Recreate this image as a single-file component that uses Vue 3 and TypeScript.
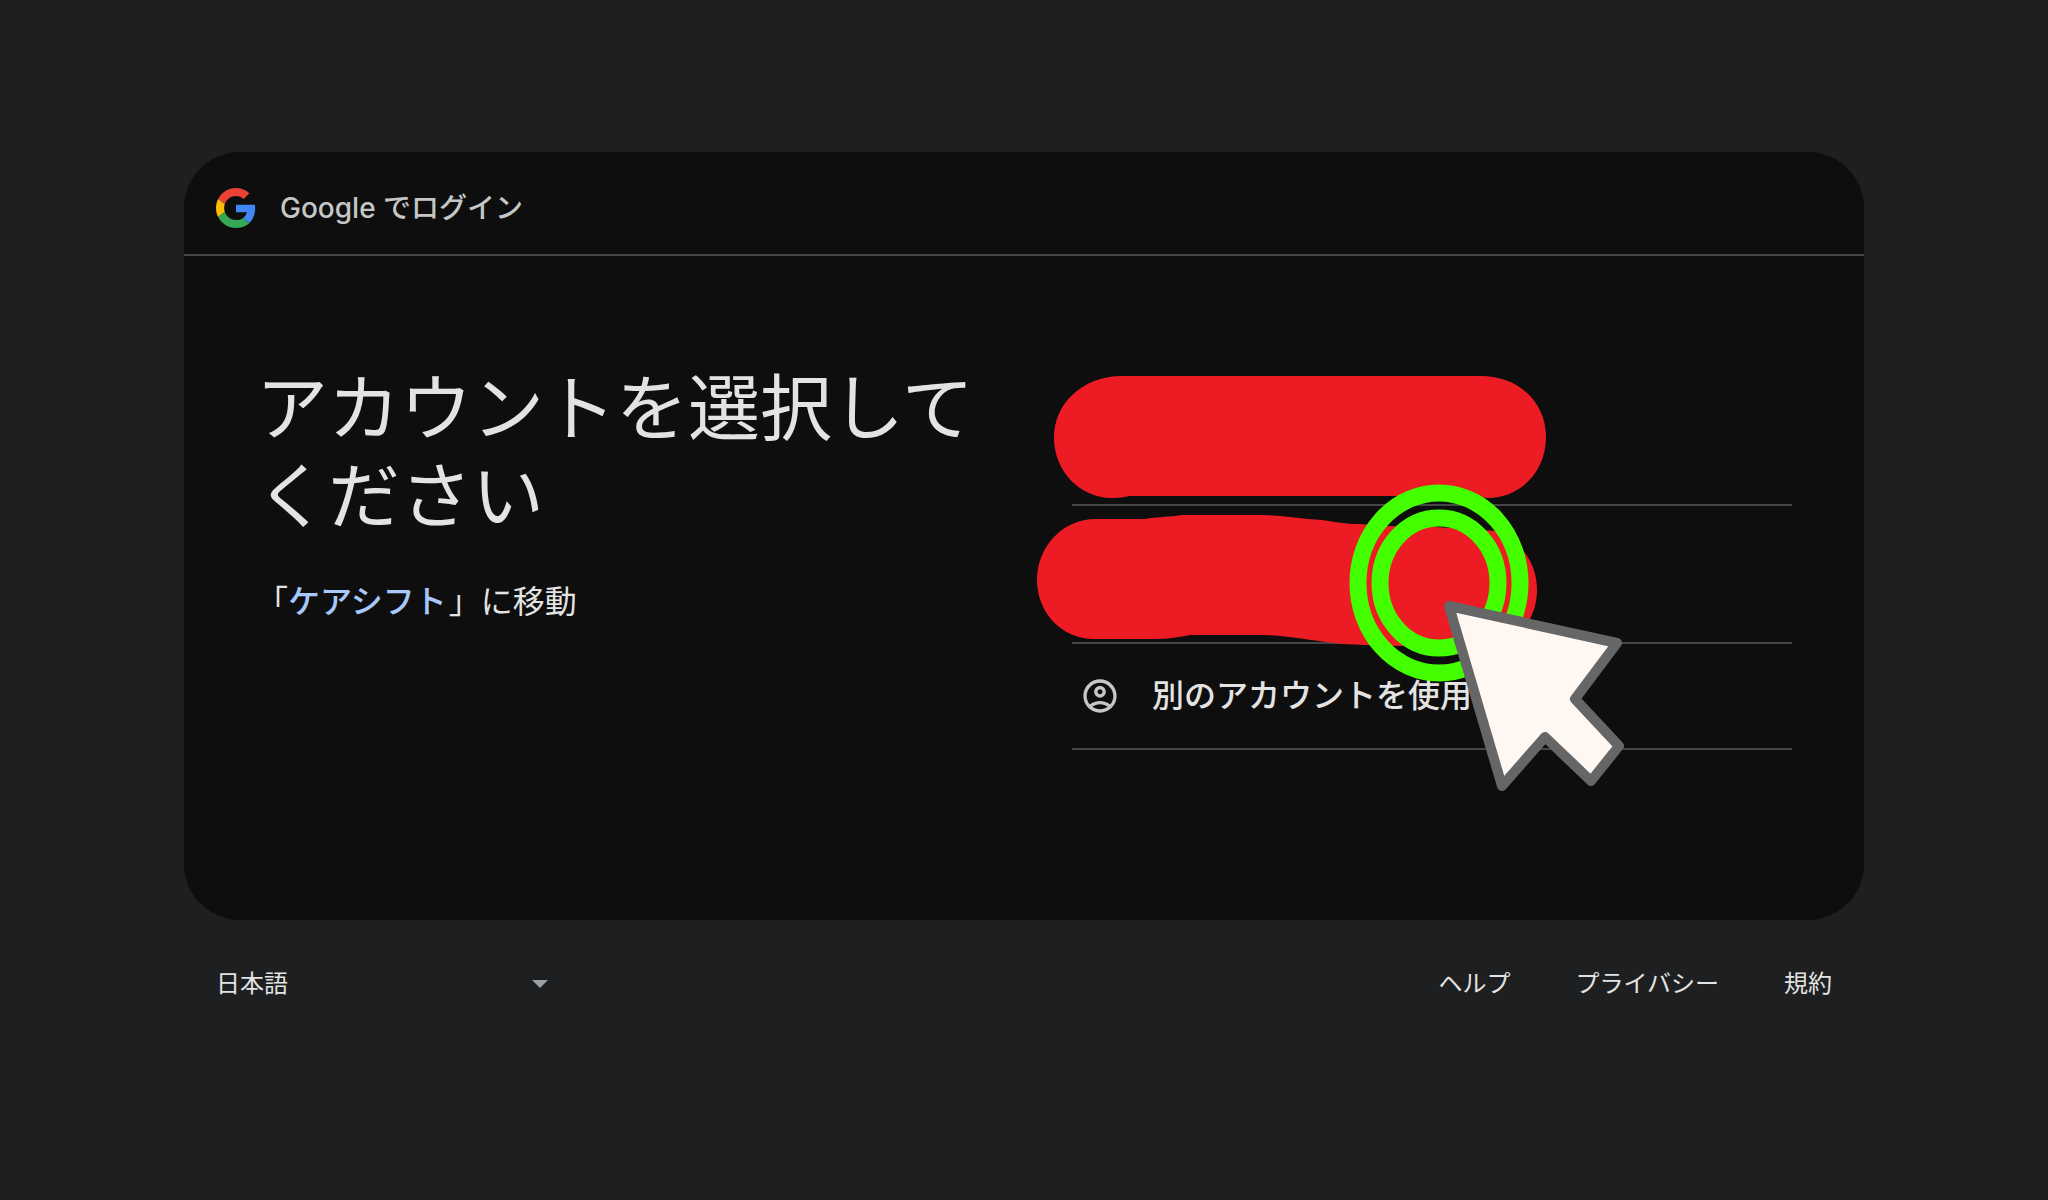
<script setup lang="ts">
import { ref } from 'vue'

interface FooterLink {
  label: string
  href: string
}

const language = ref('ja')
const links: FooterLink[] = [
  { label: 'ヘルプ', href: '#help' },
  { label: 'プライバシー', href: '#privacy' },
  { label: '規約', href: '#terms' },
]
</script>

<template>
  <div class="page">
    <main class="card">
      <header class="brand">
        <svg class="logo" viewBox="0 0 48 48" aria-hidden="true">
          <path fill="#ea4335" d="M24 9.5c3.54 0 6.71 1.22 9.21 3.6l6.85-6.85C35.9 2.38 30.47 0 24 0 14.62 0 6.51 5.38 2.56 13.22l7.98 6.19C12.43 13.72 17.74 9.5 24 9.5z" />
          <path fill="#4285f4" d="M46.98 24.55c0-1.57-.15-3.09-.38-4.55H24v9.02h12.94c-.58 2.96-2.26 5.48-4.78 7.18l7.73 6c4.51-4.18 7.09-10.36 7.09-17.65z" />
          <path fill="#fbbc05" d="M10.53 28.59c-.48-1.45-.76-2.99-.76-4.59s.27-3.14.76-4.59l-7.98-6.19C.92 16.46 0 20.12 0 24c0 3.88.92 7.54 2.56 10.78l7.97-6.19z" />
          <path fill="#34a853" d="M24 48c6.48 0 11.93-2.13 15.89-5.81l-7.73-6c-2.15 1.45-4.92 2.3-8.16 2.3-6.26 0-11.57-4.22-13.47-9.91l-7.98 6.19C6.51 42.62 14.62 48 24 48z" />
        </svg>
        <span>Google でログイン</span>
      </header>

      <div class="content">
        <section class="intro">
          <h1>アカウントを選択してください</h1>
          <p>「<a href="#app">ケアシフト</a>」に移動</p>
        </section>

        <section class="accounts">
          <ul>
            <li><button class="account" type="button" aria-label="アカウント 1"></button></li>
            <li><button class="account" type="button" aria-label="アカウント 2"></button></li>
            <li>
              <button class="other" type="button">
                <svg class="person" viewBox="0 0 24 24" aria-hidden="true">
                  <path d="M12 2C6.48 2 2 6.48 2 12s4.48 10 10 10 10-4.48 10-10S17.52 2 12 2zM7.35 18.5C8.66 17.56 10.26 17 12 17s3.34.56 4.65 1.5C15.34 19.44 13.74 20 12 20s-3.34-.56-4.65-1.5zm10.79-1.38C16.45 15.8 14.32 15 12 15s-4.45.8-6.14 2.12C4.7 15.73 4 13.95 4 12c0-4.42 3.58-8 8-8s8 3.58 8 8c0 1.95-.7 3.73-1.86 5.12z" />
                  <path d="M12 6c-1.93 0-3.5 1.57-3.5 3.5S10.07 13 12 13s3.5-1.57 3.5-3.5S13.93 6 12 6zm0 5c-.83 0-1.5-.67-1.5-1.5S11.17 8 12 8s1.5.67 1.5 1.5S12.83 11 12 11z" />
                </svg>
                <span>別のアカウントを使用</span>
              </button>
            </li>
          </ul>
          <svg class="marks" viewBox="1020 360 640 440" aria-hidden="true">
            <g fill="#ed1c24">
              <path d="M1122 376H1480C1521 376 1546 404 1546 437C1546 472 1520 498 1488 498C1483 498 1480 497 1476 496H1130C1124 497 1119 498 1112 498C1080 498 1054 471 1054 438C1054 403 1083 376 1122 376Z" />
              <path d="M1096 519H1145C1155 517 1170 517 1182 515H1264C1285 516 1302 519 1322 520C1335 522 1346 524 1360 524L1388 526L1435 527L1497 531C1520 541 1537 562 1537 590C1537 624 1512 647 1480 647L1400 646C1375 645 1350 645 1334 643C1310 640 1288 636 1266 635H1190C1180 637 1168 639 1155 639H1094C1061 639 1037 612 1037 580C1037 547 1062 519 1096 519Z" />
            </g>
            <g fill="none" stroke="#44ff00" stroke-width="17">
              <ellipse cx="1439" cy="583" rx="81" ry="90" />
              <ellipse cx="1439" cy="583" rx="59" ry="65" />
            </g>
            <path fill="#fff8f2" stroke="#666" stroke-width="10" stroke-linejoin="round" d="M1449 606L1617 643L1575 699L1619 746L1591 781L1545 737L1502 786Z" />
          </svg>
        </section>
      </div>
    </main>

    <footer class="footer">
      <div class="language">
        <select v-model="language" aria-label="言語">
          <option value="ja">日本語</option>
        </select>
        <svg viewBox="0 0 16 8" aria-hidden="true"><path d="M0 0H16L8 8Z" /></svg>
      </div>
      <nav>
        <a v-for="link in links" :key="link.label" :href="link.href">{{ link.label }}</a>
      </nav>
    </footer>
  </div>
</template>

<style>
body {
  background: #1e1f20;
}
</style>

<style scoped>
.page {
  box-sizing: border-box;
  min-height: 100vh;
  padding: 152px 184px 0;
  background: #1e1f20;
  color: #e3e3e3;
  font-family: Inter, "Noto Sans CJK JP", sans-serif;
}

.card {
  background: #0e0e0e;
  border-radius: 56px;
}

.brand {
  display: flex;
  align-items: center;
  gap: 24px;
  height: 104px;
  padding: 10px 32px 0;
  box-sizing: border-box;
  border-bottom: 2px solid #444746;
  color: #c4c7c5;
  font-size: 28px;
  font-weight: 500;
  line-height: 40px;
}

.logo {
  width: 40px;
  height: 40px;
}

.content {
  display: grid;
  grid-template-columns: 1fr 1fr;
  gap: 96px;
  padding: 108px 72px 170px;
}

h1 {
  margin: 0;
  font-size: 72px;
  font-weight: 400;
  line-height: 88px;
}

.intro p {
  margin: 38px 0 0;
  font-size: 32px;
  line-height: 48px;
}

.intro a {
  padding-right: 2px;
  color: #a8c7fa;
  font-weight: 500;
  text-decoration: none;
}

.accounts {
  position: relative;
  padding-top: 4px;
}

ul {
  margin: 0;
  padding: 0;
  list-style: none;
}

li {
  border-bottom: 2px solid #444746;
}

button {
  display: flex;
  align-items: center;
  width: 100%;
  padding: 0;
  border: 0;
  background: none;
  color: inherit;
  font: inherit;
  text-align: left;
}

.account {
  height: 136px;
}

.other {
  gap: 32px;
  height: 104px;
  padding: 0 8px;
  font-size: 32px;
  font-weight: 500;
  line-height: 48px;
}

.person {
  width: 40px;
  height: 40px;
  fill: #c4c7c5;
}

.marks {
  position: absolute;
  top: -4px;
  left: -52px;
  width: 640px;
  height: 440px;
  pointer-events: none;
}

.footer {
  display: flex;
  align-items: center;
  justify-content: space-between;
  padding: 40px 32px;
  font-size: 24px;
  line-height: 48px;
}

.language {
  position: relative;
  display: flex;
  align-items: center;
}

select {
  width: 336px;
  height: 48px;
  padding: 0;
  border: 0;
  appearance: none;
  background: none;
  color: inherit;
  font: inherit;
}

.language svg {
  position: absolute;
  right: 4px;
  width: 16px;
  height: 8px;
  fill: #9aa0a6;
  pointer-events: none;
}

nav {
  display: flex;
  gap: 65px;
}

nav a {
  color: inherit;
  text-decoration: none;
}
</style>
